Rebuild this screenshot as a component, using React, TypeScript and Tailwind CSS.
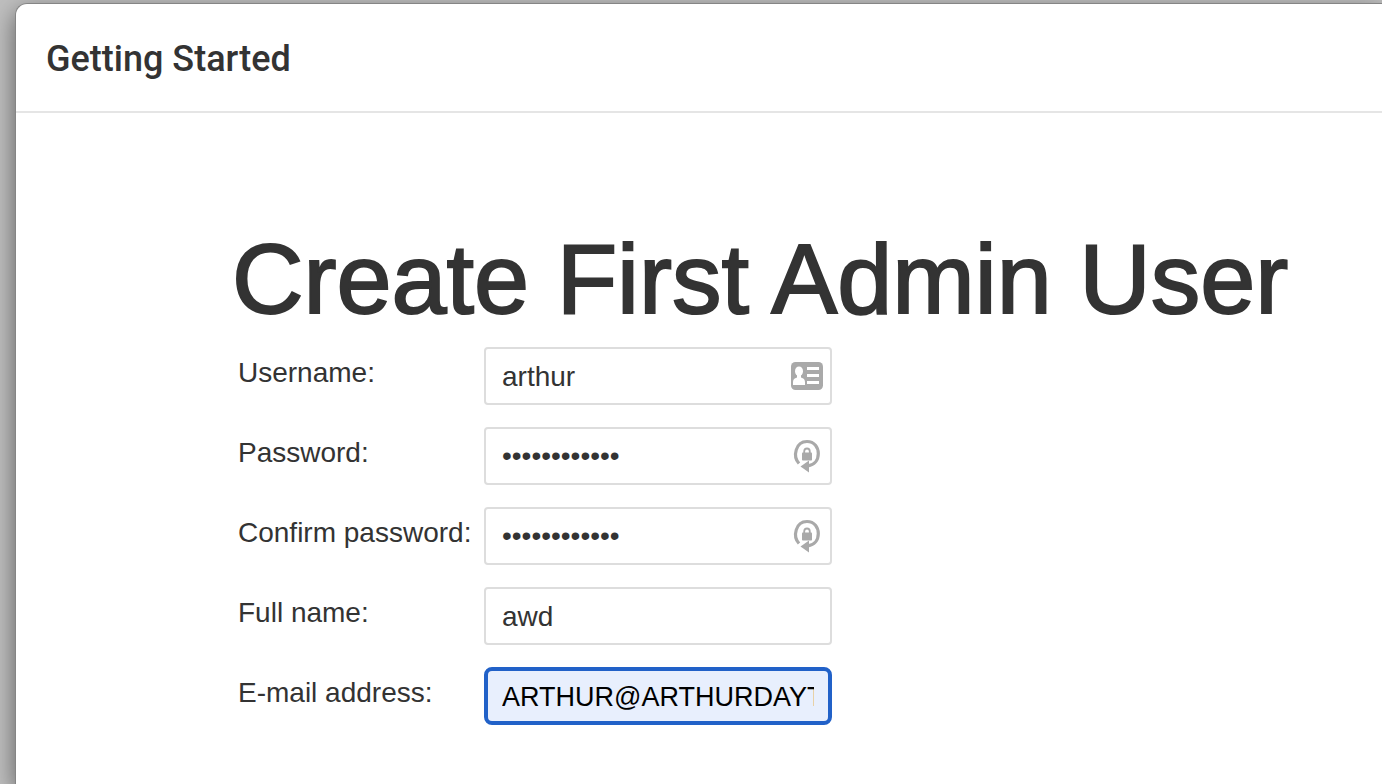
import React, { useState } from "react";

function ContactCardIcon() {
  return (
    <svg width="32" height="28" viewBox="0 0 32 28" aria-hidden="true">
      <rect width="32" height="28" rx="4.5" fill="#a9a9a9" />
      <g fill="#fff">
        <ellipse cx="8" cy="9.3" rx="4" ry="4.9" />
        <path d="M6 12h4v3.4c2.6.7 4 2 4 4.600V23H2v-3c0-2.600 1.400-3.900 4-4.600z" />
        <rect x="16" y="5" width="12" height="3" />
        <rect x="16" y="12" width="12" height="3" />
        <rect x="16" y="19" width="12" height="3" />
      </g>
    </svg>
  );
}

function PasswordIcon() {
  return (
    <svg width="32" height="36" viewBox="0 0 32 36" aria-hidden="true">
      <path
        d="M8 25.500C1.500 18.500 4.500 3.500 16 3.500C23.500 3.500 27.300 9.500 27.300 15.500C27.300 22 23.500 27 17 27.800"
        fill="none"
        stroke="#a9a9a9"
        strokeWidth="3.200"
      />
      <path d="M9.500 28.500L18 22.500v12z" fill="#a9a9a9" />
      <rect x="11" y="14.500" width="10" height="8" rx="0.800" fill="#a9a9a9" />
      <path
        d="M13.200 15v-1.500a2.800 3 0 0 1 5.600 0v1.500"
        fill="none"
        stroke="#a9a9a9"
        strokeWidth="1.800"
      />
    </svg>
  );
}

type FieldProps = {
  id: string;
  label: string;
  type?: string;
  initial: string;
  active?: boolean;
  icon?: React.ReactNode;
};

function Field({ id, label, type = "text", initial, active, icon }: FieldProps) {
  const [value, setValue] = useState(initial);
  const state = active
    ? "border-4 border-[#2161c8] rounded-lg bg-[#e8effd] text-[27px] text-black px-[14px]"
    : "border-2 border-[#dddddd] rounded bg-white text-[28px] text-[#333333] px-4";
  const inset = type === "password" ? "pt-0" : "pt-[2px]";
  return (
    <>
      <label htmlFor={id} className="pt-[10px] text-[28px] leading-8 whitespace-nowrap">
        {label}
      </label>
      <div className="relative">
        <input
          id={id}
          type={type}
          value={value}
          autoComplete="off"
          onChange={(e) => setValue(e.target.value)}
          className={`block h-[58px] w-full outline-none ${state} ${inset}`}
        />
        {icon && (
          <span className="pointer-events-none absolute inset-y-0 right-[9px] flex items-center">
            {icon}
          </span>
        )}
      </div>
    </>
  );
}

export default function App() {
  return (
    <div className="flex min-h-screen overflow-hidden bg-[#bfbfbf] pt-[3px] pl-[15px] font-['Liberation_Sans',Arial,sans-serif] text-[#333333]">
      <main className="flex-1 rounded-tl-xl border-t border-l border-[#858585] bg-white shadow-[0_8px_24px_rgba(0,0,0,0.5)]">
        <header className="border-b-2 border-[#e5e5e5] px-[30px] pt-[33px] pb-[30px]">
          <h2 className="font-[Roboto,sans-serif] text-[36px] leading-[44px] font-medium">
            Getting Started
          </h2>
        </header>
        <form className="pt-[110px] pl-[216px]" onSubmit={(e) => e.preventDefault()}>
          <h1 className="text-[99px] leading-[112px] whitespace-nowrap [-webkit-text-stroke:2px_#333333]">
            Create First Admin User
          </h1>
          <div className="mt-3 ml-[6px] grid grid-cols-[246px_348px] gap-y-[22px]">
            <Field id="username" label="Username:" initial="arthur" icon={<ContactCardIcon />} />
            <Field id="password" label="Password:" type="password" initial="abcdefghijkl" icon={<PasswordIcon />} />
            <Field id="confirm" label="Confirm password:" type="password" initial="abcdefghijkl" icon={<PasswordIcon />} />
            <Field id="fullname" label="Full name:" initial="awd" />
            <Field id="email" label="E-mail address:" type="email" initial="ARTHUR@ARTHURDAYT" active />
          </div>
        </form>
      </main>
    </div>
  );
}
